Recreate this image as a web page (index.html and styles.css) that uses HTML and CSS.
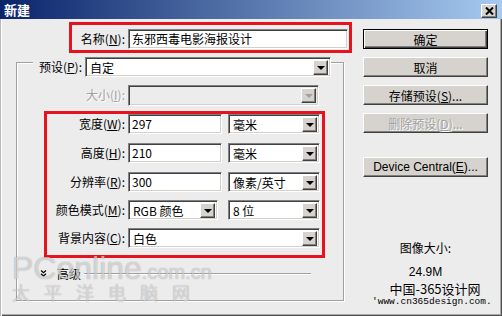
FILE: index.html
```html
<!DOCTYPE html>
<html lang="zh-CN">
<head>
    <meta charset="UTF-8">
    <title>新建</title>
    <link rel="stylesheet" href="styles.css">
</head>
<body>
<div class="window">
    <div class="titlebar">
        <span class="title">新建</span>
        <span class="close">
            <svg width="9" height="8" viewBox="0 0 9 8"><path d="M1 0.5l7 7M8 0.5l-7 7" stroke="#000" stroke-width="2"/></svg>
        </span>
    </div>
    <div class="main">
        <div class="left">
            <div class="name-box">
                <span class="lbl name-lbl">名称(<u>N</u>):</span>
                <div class="field name-field">东邪西毒电影海报设计</div>
            </div>
            <div class="group">
                <div class="group-head">
                    <span class="lbl head-lbl">预设(<u>P</u>):</span>
                    <div class="combo preset"><span class="val">自定</span><span class="dd"></span></div>
                </div>
                <div class="size-row">
                    <span class="lbl size-lbl disabled">大小(<u>I</u>):</span>
                    <div class="combo size-combo off"><span class="val"></span><span class="dd"></span></div>
                </div>
                <div class="fields-box">
                    <div class="frow">
                        <span class="lbl">宽度(<u>W</u>):</span>
                        <div class="field num">297</div>
                        <div class="combo unit"><span class="val">毫米</span><span class="dd"></span></div>
                    </div>
                    <div class="frow">
                        <span class="lbl">高度(<u>H</u>):</span>
                        <div class="field num">210</div>
                        <div class="combo unit"><span class="val">毫米</span><span class="dd"></span></div>
                    </div>
                    <div class="frow">
                        <span class="lbl">分辨率(<u>R</u>):</span>
                        <div class="field num">300</div>
                        <div class="combo unit"><span class="val">像素/英寸</span><span class="dd"></span></div>
                    </div>
                    <div class="frow">
                        <span class="lbl">颜色模式(<u>M</u>):</span>
                        <div class="combo mode"><span class="val">RGB 颜色</span><span class="dd"></span></div>
                        <div class="combo unit"><span class="val">8 位</span><span class="dd"></span></div>
                    </div>
                    <div class="frow">
                        <span class="lbl">背景内容(<u>C</u>):</span>
                        <div class="combo bg"><span class="val">白色</span><span class="dd"></span></div>
                    </div>
                </div>
                <div class="adv-row">
                    <svg class="chev" width="11" height="11" viewBox="0 0 11 11"><path d="M3 2.5l2.5 2.2 2.5-2.2M3 5.8l2.5 2.2 2.5-2.2" fill="none" stroke="#000" stroke-width="1.2"/></svg>
                    <span class="adv-text">高级</span>
                    <span class="adv-line"></span>
                </div>
            </div>
        </div>
        <div class="right">
            <div class="btn default">确定</div>
            <div class="btn">取消</div>
            <div class="btn">存储预设(<u>S</u>)...</div>
            <div class="btn disabled">删除预设(<u>D</u>)...</div>
            <div class="btn latin device">Device Central(<u>E</u>)...</div>
            <div class="img-size">图像大小:</div>
            <div class="img-value">24.9M</div>
        </div>
    </div>

    <div class="wm-pc"><span class="pc-big">PConline</span><span class="pc-small">.com.cn</span></div>
    <div class="wm-cn">太平洋电脑网</div>
    <div class="wm-365">
        <div class="wm-365-name">中国-365设计网</div>
        <div class="wm-365-url">'www.cn365design.com.</div>
    </div>
</div>
</body>
</html>
```

FILE: styles.css
```css
* {
    box-sizing: border-box;
}
body {
    margin: 0;
    width: 502px;
    height: 316px;
    overflow: hidden;
    background: #ececec;
    font-family: "Noto Sans CJK SC", "Liberation Sans", sans-serif;
    font-size: 12px;
    color: #000;
}
u {
    text-decoration: underline;
    text-underline-offset: 1px;
}
.window {
    position: relative;
    width: 502px;
    height: 316px;
    background: #ececec;
    box-shadow: inset 1px 0 #b8b8b8, inset 2px 0 #fff, inset -1px -1px #505050, inset -2px -2px #a8a8a8;
}
.titlebar {
    height: 19px;
    display: flex;
    align-items: center;
    justify-content: space-between;
    padding: 0 5px 0 4px;
    background: linear-gradient(90deg, #0a246a, #a6caf0);
}
.title {
    color: #fff;
    font-weight: bold;
    font-size: 13px;
    line-height: 1;
}
.close {
    width: 16px;
    height: 14px;
    margin-top: 2px;
    display: flex;
    align-items: center;
    justify-content: center;
    background: #d6d3ce;
    border: 1px solid;
    border-color: #fff #404040 #404040 #fff;
    box-shadow: inset -1px -1px #808080;
}
.main {
    display: flex;
}
.left {
    width: 352px;
}
.lbl {
    height: 20px;
    line-height: 20px;
    text-align: right;
    white-space: nowrap;
    flex: none;
}
.disabled {
    color: #a0a0a0;
    text-shadow: 1px 1px #fff;
}

/* sunken inputs */
.field,
.combo {
    height: 20px;
    background: #fff;
    border: 1px solid;
    border-color: #808080 #fff #fff #808080;
    box-shadow: inset 1px 1px #404040, inset -1px -1px #d4d0c8;
    flex: none;
}
.field {
    line-height: 18px;
    padding-left: 3px;
    white-space: nowrap;
}
.combo {
    display: flex;
    padding: 2px;
}
.combo .val {
    flex: 1;
    line-height: 16px;
    padding-left: 2px;
    white-space: nowrap;
}
.combo .dd {
    width: 15px;
    height: 15px;
    flex: none;
    display: flex;
    align-items: center;
    justify-content: center;
    background: #d6d3ce;
    border: 1px solid;
    border-color: #fff #404040 #404040 #fff;
    box-shadow: inset -1px -1px #808080;
}
.combo .dd::after {
    content: "";
    border-top: 4px solid #000;
    border-left: 4px solid transparent;
    border-right: 4px solid transparent;
    margin-top: 1px;
}
.combo.off {
    background: #ececec;
}
.combo.off .dd::after {
    border-top-color: #a0a0a0;
}

/* name */
.name-box {
    margin: 3px 0 0 69px;
    width: 283px;
    height: 31px;
    border: 3px solid #e5131d;
    display: flex;
    align-items: flex-start;
    padding-top: 4px;
}
.name-lbl {
    width: 53px;
    margin-right: 3px;
}
.name-field {
    width: 220px;
}

/* preset group */
.group {
    margin: 9px 0 0 16px;
    width: 328px;
    height: 239px;
    border: 1px solid #a0a0a0;
    box-shadow: inset 1px 1px #fff, 1px 1px #fff;
}
.group-head {
    display: flex;
    margin-top: -6px;
}
.head-lbl {
    width: 52px;
    margin-left: 16px;
    padding-right: 3px;
    background: #ececec;
}
.preset {
    width: 246px;
}
.size-row {
    display: flex;
    margin-top: 8px;
}
.size-lbl {
    width: 108px;
    margin-right: 3px;
}
.size-combo {
    width: 191px;
    height: 21px;
}

.fields-box {
    margin: 5px 0 0 27px;
    width: 281px;
    border: 3px solid #e5131d;
    padding-bottom: 7px;
}
.frow {
    display: flex;
    height: 20px;
}
.frow:nth-child(2),
.frow:nth-child(3) {
    margin-top: 9px;
}
.frow:nth-child(4),
.frow:nth-child(5) {
    margin-top: 8px;
}
.frow .lbl {
    width: 78px;
    margin-right: 3px;
}
.num {
    width: 94px;
    margin-right: 6px;
}
.unit {
    width: 92px;
}
.mode {
    width: 90px;
    margin-right: 10px;
}
.bg {
    width: 192px;
}

.adv-row {
    display: flex;
    align-items: center;
    height: 13px;
    margin: 9px 0 0 21px;
}
.chev {
    flex: none;
}
.adv-text {
    margin-left: 8px;
    line-height: 13px;
}
.adv-line {
    flex: 1;
    height: 2px;
    margin: 1px 32px 0 3px;
    border-top: 1px solid #a0a0a0;
    border-bottom: 1px solid #fff;
}

/* buttons */
.right {
    margin-left: 11px;
    width: 125px;
    padding-top: 10px;
    display: flex;
    flex-direction: column;
    gap: 8px;
}
.btn {
    height: 20px;
    display: flex;
    align-items: center;
    justify-content: center;
    background: #d6d3ce;
    border: 1px solid;
    border-color: #fff #404040 #404040 #fff;
    box-shadow: inset -1px -1px #808080;
    white-space: nowrap;
}
.btn.default {
    border: 1px solid #000;
    box-shadow: inset 1px 1px #fff, inset -1px -1px #404040, inset -2px -2px #808080;
}
.latin {
    font-family: "Liberation Sans", sans-serif;
    font-size: 12px;
}
.device {
    margin-top: 16px;
}
.img-size {
    margin-top: 56px;
    text-align: center;
    line-height: 14px;
}
.img-value {
    margin-top: 2px;
    text-align: center;
    line-height: 14px;
    font-family: "Liberation Sans", sans-serif;
}

/* watermarks over the dialog */
.wm-pc {
    position: absolute;
    left: 12px;
    top: 250px;
    white-space: nowrap;
    font-family: "Liberation Sans", sans-serif;
    color: rgba(255, 255, 255, 0.6);
    text-shadow: 0 0 1px rgba(0, 0, 0, 0.4);
}
.pc-big {
    font-size: 32px;
}
.pc-small {
    font-size: 20px;
}
.wm-cn {
    position: absolute;
    left: 12px;
    top: 281px;
    font-size: 18px;
    letter-spacing: 14px;
    line-height: 22px;
    white-space: nowrap;
    color: rgba(255, 255, 255, 0.6);
    text-shadow: 0 0 1px rgba(0, 0, 0, 0.4);
}
.wm-365 {
    position: absolute;
    left: 372px;
    top: 281px;
    width: 126px;
    text-align: center;
}
.wm-365-name {
    font-size: 13px;
    line-height: 15px;
    text-shadow: 0 0 1px #fff;
}
.wm-365-url {
    font-family: "Liberation Mono", monospace;
    font-size: 9.5px;
    line-height: 11px;
    text-align: left;
}
```
